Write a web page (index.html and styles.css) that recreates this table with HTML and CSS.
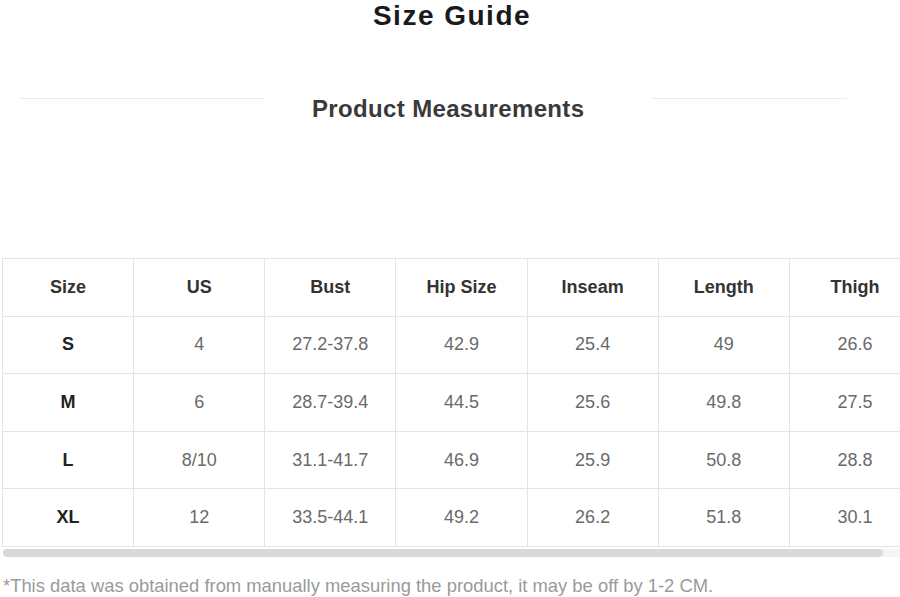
FILE: index.html
```html
<!DOCTYPE html>
<html lang="en">
<head>
<meta charset="utf-8">
<title>Size Guide</title>
<link rel="stylesheet" href="styles.css">
</head>
<body>
<main class="page">
  <h1 class="title">Size Guide</h1>
  <div class="section-head">
    <span class="rule rule-left"></span>
    <h2 class="section-title">Product Measurements</h2>
    <span class="rule rule-right"></span>
  </div>
  <div class="table-scroll">
    <table class="size-table">
      <thead>
        <tr><th>Size</th><th>US</th><th>Bust</th><th>Hip Size</th><th>Inseam</th><th>Length</th><th>Thigh</th></tr>
      </thead>
      <tbody>
        <tr><th>S</th><td>4</td><td>27.2-37.8</td><td>42.9</td><td>25.4</td><td>49</td><td>26.6</td></tr>
        <tr><th>M</th><td>6</td><td>28.7-39.4</td><td>44.5</td><td>25.6</td><td>49.8</td><td>27.5</td></tr>
        <tr><th>L</th><td>8/10</td><td>31.1-41.7</td><td>46.9</td><td>25.9</td><td>50.8</td><td>28.8</td></tr>
        <tr><th>XL</th><td>12</td><td>33.5-44.1</td><td>49.2</td><td>26.2</td><td>51.8</td><td>30.1</td></tr>
      </tbody>
    </table>
  </div>
  <div class="scroll-track"><div class="scroll-thumb"></div></div>
  <p class="note">*This data was obtained from manually measuring the product, it may be off by 1-2 CM.</p>
</main>
</body>
</html>
```
FILE: styles.css
```css
html, body {
  margin: 0;
  padding: 0;
  background: #ffffff;
}

body {
  font-family: "Liberation Sans", Arial, sans-serif;
  color: #333333;
  overflow: hidden;
}

.page {
  width: 900px;
}

.title {
  margin: 0;
  padding-top: 2px;
  font-size: 28px;
  line-height: 28px;
  font-weight: 700;
  letter-spacing: 1.5px;
  text-align: center;
  color: #1a1a1a;
  padding-left: 4px;
}

.section-head {
  display: flex;
  align-items: flex-start;
  margin-top: 67px;
  padding-left: 20px;
}

.rule {
  display: block;
  height: 1px;
  background: #ececec;
  margin-top: 1px;
}

.rule-left {
  width: 245px;
  margin-right: 47px;
}

.rule-right {
  width: 196px;
  margin-left: 67px;
}

.section-title {
  margin: 0;
  font-size: 24px;
  line-height: 24px;
  font-weight: 700;
  letter-spacing: 0.35px;
  color: #3a3a3a;
  white-space: nowrap;
}

.table-scroll {
  margin-top: 137px;
  margin-left: 2px;
  overflow: hidden;
}

.size-table {
  border-collapse: collapse;
  table-layout: fixed;
  width: 919px;
  min-width: 919px;
}

.size-table th,
.size-table td {
  height: 56.6px;
  padding: 0;
  border: 1px solid #e4e4e4;
  text-align: center;
  vertical-align: middle;
  font-size: 18px;
}

.size-table thead th {
  font-weight: 700;
  color: #333333;
}

.size-table tbody th {
  font-weight: 700;
  color: #222222;
}

.size-table td {
  font-weight: 400;
  color: #6a6a6a;
}

.scroll-track {
  margin: 2px 0 0 3px;
  height: 8px;
  background: #f5f5f5;
  border-radius: 4px 0 0 4px;
}

.scroll-thumb {
  width: 880px;
  height: 8px;
  background: #d9d9d9;
  border-radius: 4px;
}

.note {
  margin: 19px 0 0 3px;
  font-size: 18.4px;
  line-height: 20px;
  color: #9a9a9a;
  white-space: nowrap;
}
```
